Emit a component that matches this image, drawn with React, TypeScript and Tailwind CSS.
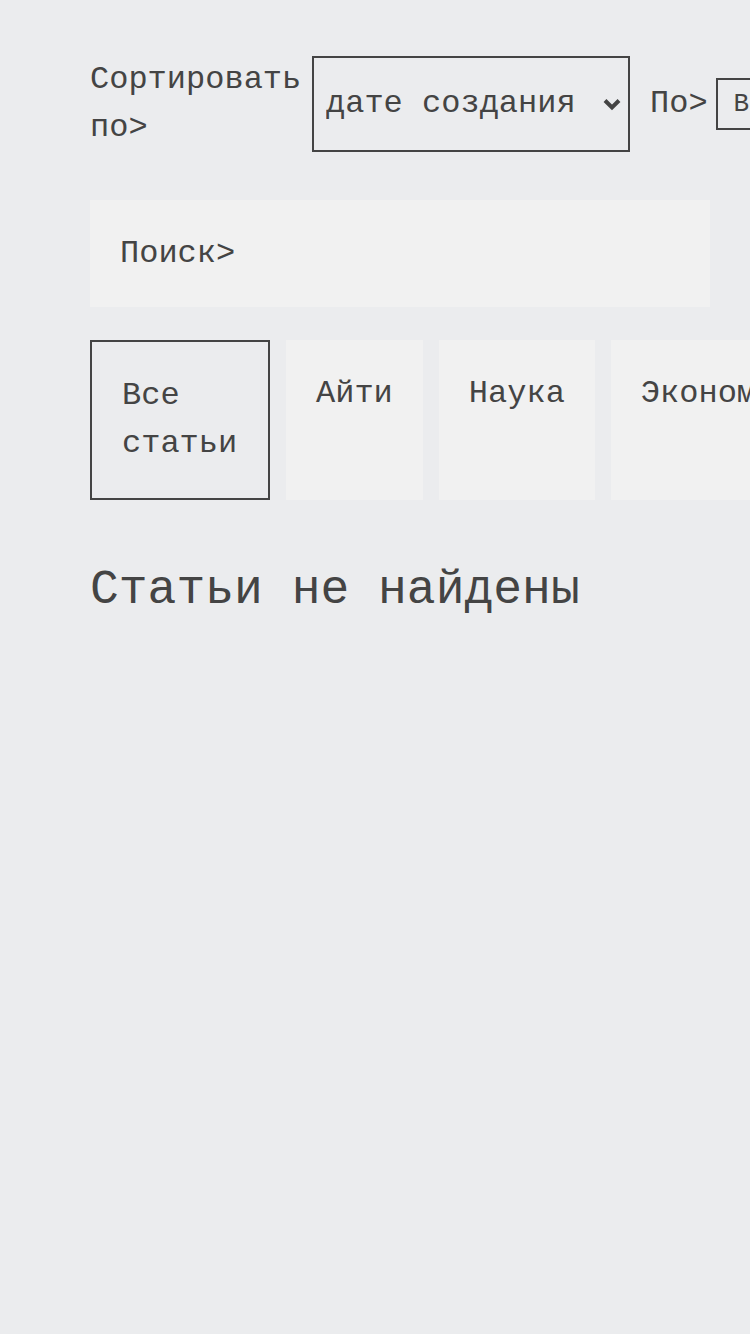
import { useState } from "react";

const tabs = ["Все статьи", "Айти", "Наука", "Экономика"];

function Chevron() {
  return (
    <svg
      className="pointer-events-none absolute right-[8px] top-1/2 -translate-y-1/2"
      width="20"
      height="14"
      viewBox="0 0 20 14"
      fill="none"
    >
      <path d="M3 3.5 10 10.5l7-7" stroke="#444" strokeWidth="4" />
    </svg>
  );
}

export default function App() {
  const [active, setActive] = useState(0);

  return (
    <div className="min-h-screen w-[750px] overflow-hidden bg-[#ebecee] pl-[90px] pr-[40px] pt-[56px] font-['Liberation_Mono',monospace] text-[32px] leading-[1.5] text-[#444]">
      <div className="flex items-center">
        <label className="mr-[11px] w-[211px] shrink-0">Сортировать по&gt;</label>
        <div className="relative shrink-0">
          <select className="block h-[96px] w-[318px] appearance-none border-2 border-[#444] bg-transparent pl-[12px] pr-[40px] outline-none">
            <option>дате создания</option>
            <option>названию</option>
          </select>
          <Chevron />
        </div>
        <span className="ml-[20px] shrink-0">По&gt;</span>
        <select className="ml-[8px] h-[52px] w-[240px] shrink-0 appearance-none border-2 border-[#444] bg-transparent pl-[16px] text-[26px] outline-none">
          <option>Возрастанию</option>
          <option>Убыванию</option>
        </select>
      </div>

      <input
        className="mt-[48px] block h-[107px] w-[620px] bg-[#f1f1f1] pl-[30px] outline-none placeholder:text-[#444]"
        placeholder="Поиск>"
      />

      <div className="mt-[33px] flex gap-[16px]">
        {tabs.map((t, i) => (
          <div
            key={t}
            onClick={() => setActive(i)}
            className={
              i === active
                ? "w-[180px] shrink-0 cursor-pointer border-2 border-[#444] px-[30px] pt-[30px] pb-[30px]"
                : "shrink-0 cursor-pointer whitespace-nowrap bg-[#f1f1f1] px-[30px] pt-[30px] pb-[30px]"
            }
          >
            {t}
          </div>
        ))}
      </div>

      <h1 className="mt-[54px] whitespace-nowrap text-[48px] leading-[1.5]">Статьи не найдены</h1>
    </div>
  );
}
